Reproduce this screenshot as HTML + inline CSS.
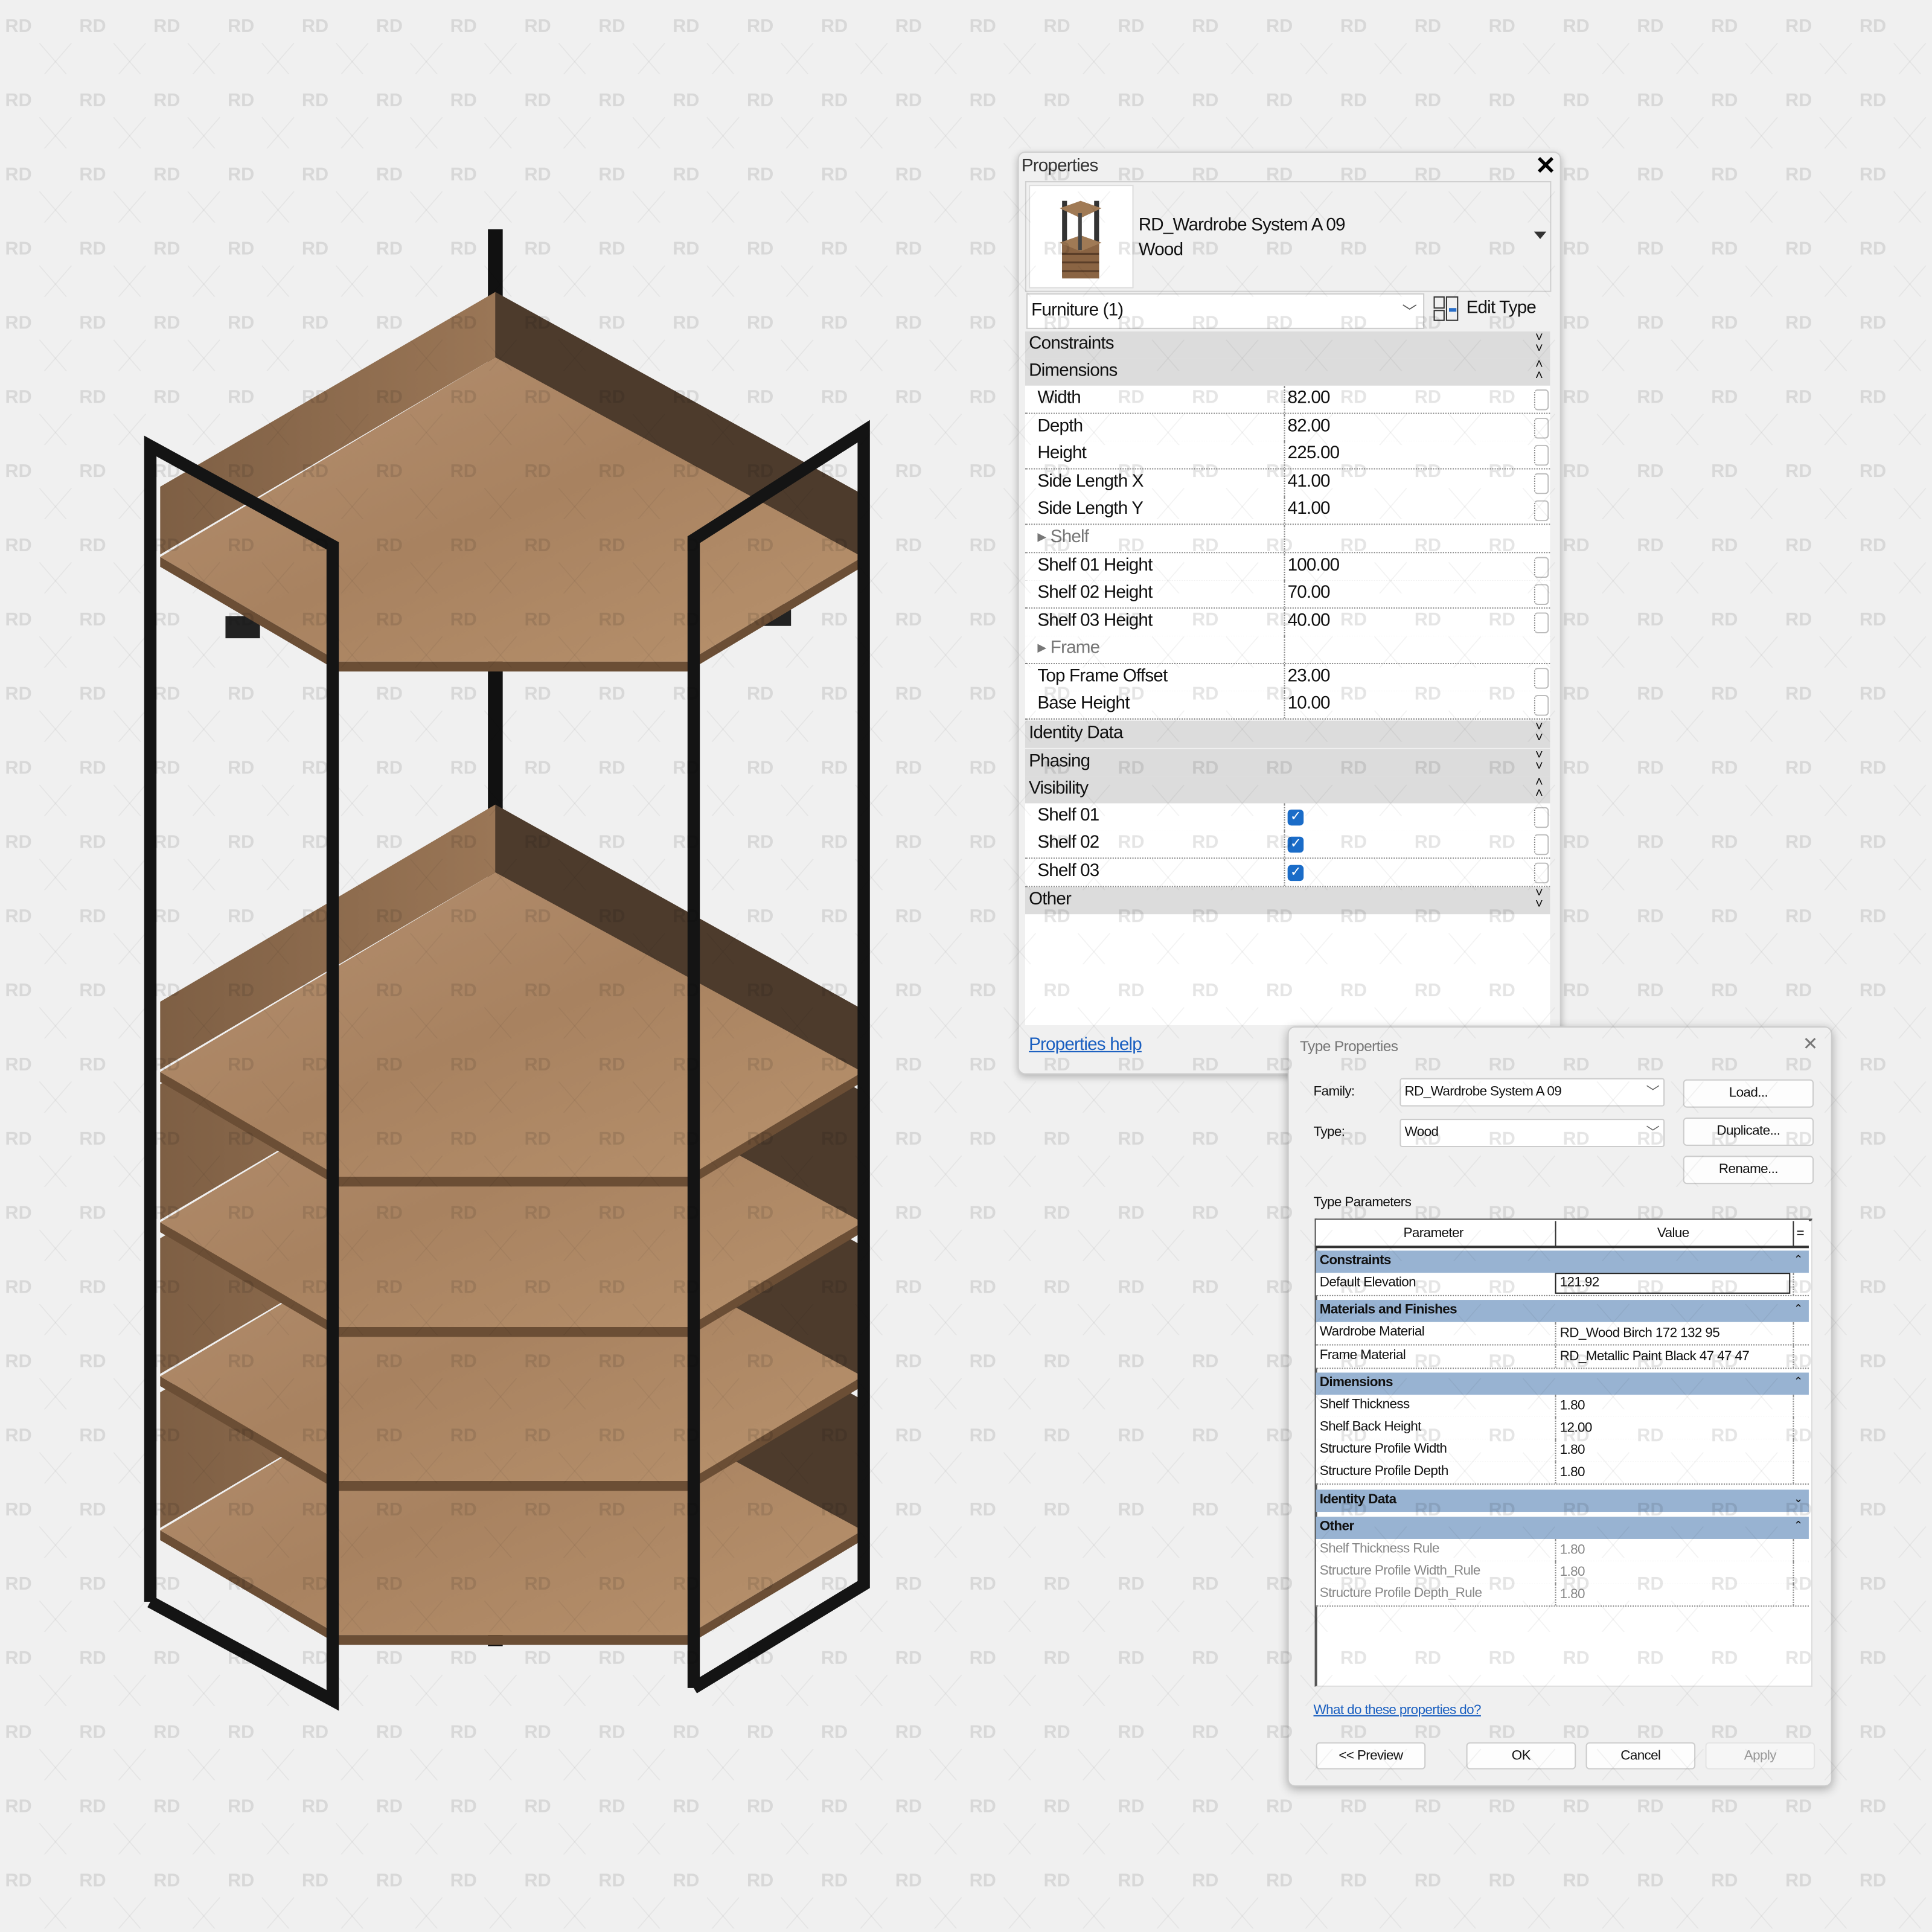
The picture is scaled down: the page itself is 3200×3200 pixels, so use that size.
<!DOCTYPE html>
<html><head><meta charset="utf-8">
<style>
html,body{margin:0;padding:0;background:#f0f0f0;}
#root{position:relative;width:1568px;height:1568px;transform:scale(2.040816);transform-origin:0 0;overflow:hidden;background:#f0f0f0;font-family:"Liberation Sans",sans-serif;}
.abs{position:absolute;}
.pp{font-size:14.5px;color:#111;letter-spacing:-0.4px;}
.row{position:absolute;left:832px;width:426px;height:22px;background:#fff;border-bottom:1px dotted #888;}
.row .l{position:absolute;left:10px;top:2px;}
.row .v{position:absolute;left:210px;top:2px;border-left:1px dotted #888;height:22px;top:0;padding-left:2px;line-height:21px;}
.row .cb{position:absolute;right:1px;top:3px;width:10px;height:15px;border:1px solid #bbb;border-radius:3px;border-left:1px dotted #888;}
.grp{position:absolute;left:832px;width:426px;height:22px;background:#dcdcdc;}
.grp span{position:absolute;left:3px;top:2px;}
.grp i{position:absolute;right:6px;top:1px;font-style:normal;font-size:11px;line-height:9px;}
.chk{display:inline-block;width:13px;height:13px;background:#1a6cc8;border-radius:3px;color:#fff;font-size:11px;line-height:13px;text-align:center;margin-top:4px;}
.tp{font-size:11px;color:#111;letter-spacing:-0.3px;}
.btn{position:absolute;background:#fdfdfd;border:1px solid #ccc;border-radius:3px;text-align:center;line-height:20px;font-size:11px;}
.trow{position:absolute;left:1068px;width:400px;height:18px;background:#fff;border-bottom:1px dotted #888;}
.trow .l{position:absolute;left:3px;top:2px;}
.trow .v{position:absolute;left:194px;top:0;height:18px;border-left:1px dotted #888;padding-left:3px;line-height:18px;width:190px;}
.trow .e{position:absolute;right:0;top:0;width:12px;height:18px;border-left:1px dotted #888;}
.tgrp{position:absolute;left:1068px;width:400px;height:18px;background:#98b3d2;font-weight:bold;}
.tgrp span{position:absolute;left:3px;top:2px;}
.tgrp i{position:absolute;right:5px;top:2px;font-style:normal;font-size:9px;font-weight:normal;}
.gray{color:#888;}
</style></head><body>
<div id="root">

<svg class="abs" style="left:0;top:0" width="1568" height="1568" viewBox="0 0 1568 1568">
<defs>
<linearGradient id="fl" x1="0" y1="0" x2="1" y2="1"><stop offset="0" stop-color="#b59070"/><stop offset="0.5" stop-color="#a88260"/><stop offset="1" stop-color="#b8926d"/></linearGradient>
<linearGradient id="lb" x1="0" y1="0" x2="1" y2="0"><stop offset="0" stop-color="#7e5f44"/><stop offset="1" stop-color="#9a7656"/></linearGradient>
</defs>
<rect x="396" y="186" width="12" height="1150" fill="#111"/>
<g transform="translate(0,790)">
<polygon points="402,290 130,450 130,340 402,180" fill="url(#lb)"/><polygon points="402,290 698,455 698,345 402,180" fill="#4d3b2c"/>
<polygon points="402,290 130,452 275,537 558,537 700,452" fill="url(#fl)"/>
<polygon points="130,452 275,537 558,537 700,452 700,460 558,545 275,545 130,460" fill="#6b4e35"/></g>
<g transform="translate(0,665)">
<polygon points="402,290 130,450 130,340 402,180" fill="url(#lb)"/><polygon points="402,290 698,455 698,345 402,180" fill="#4d3b2c"/>
<polygon points="402,290 130,452 275,537 558,537 700,452" fill="url(#fl)"/>
<polygon points="130,452 275,537 558,537 700,452 700,460 558,545 275,545 130,460" fill="#6b4e35"/></g>
<g transform="translate(0,540)">
<polygon points="402,290 130,450 130,340 402,180" fill="url(#lb)"/><polygon points="402,290 698,455 698,345 402,180" fill="#4d3b2c"/>
<polygon points="402,290 130,452 275,537 558,537 700,452" fill="url(#fl)"/>
<polygon points="130,452 275,537 558,537 700,452 700,460 558,545 275,545 130,460" fill="#6b4e35"/></g>
<g transform="translate(0,418)">
<polygon points="402,290 130,450 130,395 402,235" fill="url(#lb)"/><polygon points="402,290 698,455 698,400 402,235" fill="#4d3b2c"/>
<polygon points="402,290 130,452 275,537 558,537 700,452" fill="url(#fl)"/>
<polygon points="130,452 275,537 558,537 700,452 700,460 558,545 275,545 130,460" fill="#6b4e35"/></g>
<rect x="183" y="500" width="28" height="18" fill="#222"/>
<rect x="612" y="490" width="30" height="18" fill="#222"/>
<g>
<polygon points="402,290 130,450 130,395 402,237" fill="url(#lb)"/><polygon points="402,290 698,455 698,400 402,237" fill="#4d3b2c"/>
<polygon points="402,290 130,452 275,537 558,537 700,452" fill="url(#fl)"/>
<polygon points="130,452 275,537 558,537 700,452 700,460 558,545 275,545 130,460" fill="#6b4e35"/></g>
<g fill="none" stroke="#141414" stroke-width="10" stroke-linejoin="miter">
<polyline points="122,1300 122,362 270,443 270,1380 122,1300"/>
<polyline points="563,1370 563,438 701,350 701,1286 563,1370"/>
</g>
</svg>

<div class="abs" style="left:826px;top:123px;width:439px;height:747px;background:#f0f0f0;border:1px solid #cfcfcf;border-radius:6px;box-shadow:0 2px 6px rgba(0,0,0,.25);"></div>
<div class="abs pp" style="left:829px;top:127px;color:#333;">Properties</div>
<div class="abs" style="left:1246px;top:122px;font-size:20px;font-weight:bold;">✕</div>
<div class="abs" style="left:832px;top:147px;width:425px;height:88px;border:1px solid #d0d0d0;background:#f0f0f0;"></div>
<div class="abs" style="left:835px;top:150px;width:83px;height:82px;background:#fff;border:1px solid #ddd;">
<svg width="83" height="82"><rect x="26" y="12" width="4" height="62" fill="#333"/><rect x="52" y="12" width="4" height="62" fill="#333"/><polygon points="24,18 41,12 58,18 41,26" fill="#a07a55"/><rect x="26" y="45" width="30" height="30" fill="#8a6443"/><polygon points="24,46 41,40 58,46 41,53" fill="#a07a55"/><g stroke="#5a3e28" stroke-width="1.5"><line x1="26" y1="55" x2="56" y2="55"/><line x1="26" y1="62" x2="56" y2="62"/><line x1="26" y1="69" x2="56" y2="69"/></g><rect x="39" y="22" width="3" height="30" fill="#444"/></svg></div>
<div class="abs pp" style="left:924px;top:173px;line-height:20px;">RD_Wardrobe System A 09<br>Wood</div>
<div class="abs" style="left:1245px;top:188px;width:0;height:0;border-left:5px solid transparent;border-right:5px solid transparent;border-top:6px solid #333;"></div>
<div class="abs" style="left:833px;top:238px;width:321px;height:27px;background:#fff;border:1px solid #ccc;"></div>
<div class="abs pp" style="left:837px;top:244px;">Furniture (1)</div>
<div class="abs" style="left:1138px;top:244px;font-size:12px;color:#555;">﹀</div>
<svg class="abs" style="left:1163px;top:240px" width="22" height="22"><rect x="1" y="1" width="8" height="9" fill="none" stroke="#333"/><rect x="1" y="12" width="8" height="8" fill="none" stroke="#333"/><rect x="11" y="1" width="9" height="19" fill="none" stroke="#333"/><rect x="13" y="10" width="6" height="3" fill="#2a6fc9"/></svg>
<div class="abs pp" style="left:1190px;top:242px;">Edit Type</div>

<div class="grp pp" style="top:269px;"><span>Constraints</span><i>˅<br>˅</i></div>
<div class="grp pp" style="top:291px;"><span>Dimensions</span><i>˄<br>˄</i></div>
<div class="row pp" style="top:313px;"><span class="l">Width</span><span class="v">82.00</span><span class="cb"></span></div>
<div class="row pp" style="top:336px;"><span class="l">Depth</span><span class="v">82.00</span><span class="cb"></span></div>
<div class="row pp" style="top:358px;"><span class="l">Height</span><span class="v">225.00</span><span class="cb"></span></div>
<div class="row pp" style="top:381px;"><span class="l">Side Length X</span><span class="v">41.00</span><span class="cb"></span></div>
<div class="row pp" style="top:403px;"><span class="l">Side Length Y</span><span class="v">41.00</span><span class="cb"></span></div>
<div class="row pp" style="top:426px;"><span class="l" style="color:#777">▸ Shelf</span><span class="v"></span></div>
<div class="row pp" style="top:449px;"><span class="l">Shelf 01 Height</span><span class="v">100.00</span><span class="cb"></span></div>
<div class="row pp" style="top:471px;"><span class="l">Shelf 02 Height</span><span class="v">70.00</span><span class="cb"></span></div>
<div class="row pp" style="top:494px;"><span class="l">Shelf 03 Height</span><span class="v">40.00</span><span class="cb"></span></div>
<div class="row pp" style="top:516px;"><span class="l" style="color:#777">▸ Frame</span><span class="v"></span></div>
<div class="row pp" style="top:539px;"><span class="l">Top Frame Offset</span><span class="v">23.00</span><span class="cb"></span></div>
<div class="row pp" style="top:561px;"><span class="l">Base Height</span><span class="v">10.00</span><span class="cb"></span></div>
<div class="grp pp" style="top:585px;"><span>Identity Data</span><i>˅<br>˅</i></div>
<div class="grp pp" style="top:608px;"><span>Phasing</span><i>˅<br>˅</i></div>
<div class="grp pp" style="top:630px;"><span>Visibility</span><i>˄<br>˄</i></div>
<div class="row pp" style="top:652px;"><span class="l">Shelf 01</span><span class="v"><span class="chk">✓</span></span><span class="cb"></span></div>
<div class="row pp" style="top:674px;"><span class="l">Shelf 02</span><span class="v"><span class="chk">✓</span></span><span class="cb"></span></div>
<div class="row pp" style="top:697px;"><span class="l">Shelf 03</span><span class="v"><span class="chk">✓</span></span><span class="cb"></span></div>
<div class="grp pp" style="top:720px;"><span>Other</span><i>˅<br>˅</i></div>
<div class="abs" style="left:832px;top:742px;width:426px;height:90px;background:#fff;"></div>
<div class="abs pp" style="left:835px;top:840px;color:#1a5fc0;text-decoration:underline;">Properties help</div>

<div class="abs" style="left:1045px;top:833px;width:440px;height:615px;background:#f0f0f0;border:1px solid #ccc;border-radius:6px;box-shadow:0 2px 8px rgba(0,0,0,.3);"></div>
<div class="abs tp" style="left:1055px;top:842px;color:#777;font-size:12px;">Type Properties</div>
<div class="abs" style="left:1463px;top:838px;font-size:15px;color:#777;">✕</div>
<div class="abs tp" style="left:1066px;top:880px;">Family:</div>
<div class="abs" style="left:1136px;top:875px;width:213px;height:21px;background:#fff;border:1px solid #ccc;border-radius:2px;"></div>
<div class="abs tp" style="left:1140px;top:880px;">RD_Wardrobe System A 09</div>
<div class="abs tp" style="left:1336px;top:878px;color:#666;">﹀</div>
<div class="abs tp" style="left:1066px;top:913px;">Type:</div>
<div class="abs" style="left:1136px;top:908px;width:213px;height:21px;background:#fff;border:1px solid #ccc;border-radius:2px;"></div>
<div class="abs tp" style="left:1140px;top:913px;">Wood</div>
<div class="abs tp" style="left:1336px;top:911px;color:#666;">﹀</div>
<div class="btn tp" style="left:1366px;top:876px;width:104px;height:21px;">Load...</div>
<div class="btn tp" style="left:1366px;top:907px;width:104px;height:21px;">Duplicate...</div>
<div class="btn tp" style="left:1366px;top:938px;width:104px;height:21px;">Rename...</div>
<div class="abs tp" style="left:1066px;top:970px;">Type Parameters</div>
<div class="abs" style="left:1067px;top:989px;width:401px;height:377px;background:#fff;border-left:2px solid #555;border-top:2px solid #555;border-right:1px solid #ddd;border-bottom:1px solid #ddd;"></div>
<div class="abs" style="left:1068px;top:990px;width:400px;height:21px;border-bottom:2px solid #333;background:#fff;"></div>
<div class="abs" style="left:1262px;top:991px;width:1px;height:21px;background:#333;"></div>
<div class="abs" style="left:1455px;top:991px;width:1px;height:21px;background:#333;"></div>
<div class="abs tp" style="left:1139px;top:995px;">Parameter</div>
<div class="abs tp" style="left:1345px;top:995px;">Value</div>
<div class="abs tp" style="left:1458px;top:995px;">=</div>

<div class="tgrp tp" style="top:1015px;"><span>Constraints</span><i>⌃</i></div>
<div class="trow tp" style="top:1033px;"><span class="l">Default Elevation</span><span class="v" style="border:1.5px solid #222;width:186px;height:15px;line-height:15px;">121.92</span><span class="e"></span></div>
<div class="tgrp tp" style="top:1055px;"><span>Materials and Finishes</span><i>⌃</i></div>
<div class="trow tp" style="top:1073px;"><span class="l">Wardrobe Material</span><span class="v">RD_Wood Birch 172 132 95</span><span class="e"></span></div>
<div class="trow tp" style="top:1092px;"><span class="l">Frame Material</span><span class="v">RD_Metallic Paint Black 47 47 47</span><span class="e"></span></div>
<div class="tgrp tp" style="top:1114px;"><span>Dimensions</span><i>⌃</i></div>
<div class="trow tp" style="top:1132px;"><span class="l">Shelf Thickness</span><span class="v">1.80</span><span class="e"></span></div>
<div class="trow tp" style="top:1150px;"><span class="l">Shelf Back Height</span><span class="v">12.00</span><span class="e"></span></div>
<div class="trow tp" style="top:1168px;"><span class="l">Structure Profile Width</span><span class="v">1.80</span><span class="e"></span></div>
<div class="trow tp" style="top:1186px;"><span class="l">Structure Profile Depth</span><span class="v">1.80</span><span class="e"></span></div>
<div class="tgrp tp" style="top:1209px;"><span>Identity Data</span><i>⌄</i></div>
<div class="tgrp tp" style="top:1231px;"><span>Other</span><i>⌃</i></div>
<div class="trow tp gray" style="top:1249px;"><span class="l">Shelf Thickness Rule</span><span class="v">1.80</span><span class="e"></span></div>
<div class="trow tp gray" style="top:1267px;"><span class="l">Structure Profile Width_Rule</span><span class="v">1.80</span><span class="e"></span></div>
<div class="trow tp gray" style="top:1285px;"><span class="l">Structure Profile Depth_Rule</span><span class="v">1.80</span><span class="e"></span></div>
<div class="abs tp" style="left:1066px;top:1382px;color:#1a5fc0;text-decoration:underline;">What do these properties do?</div>
<div class="btn tp" style="left:1068px;top:1414px;width:87px;height:20px;">&lt;&lt; Preview</div>
<div class="btn tp" style="left:1190px;top:1414px;width:87px;height:20px;">OK</div>
<div class="btn tp" style="left:1287px;top:1414px;width:87px;height:20px;">Cancel</div>
<div class="btn tp" style="left:1384px;top:1414px;width:87px;height:20px;color:#999;border-color:#e4e4e4;background:#f6f6f6;">Apply</div>

<svg class="abs" style="left:0;top:0;pointer-events:none" width="1568" height="1568">
<defs><pattern id="wm" x="0" y="0" width="60.2" height="60.2" patternUnits="userSpaceOnUse">
<text x="15" y="26" text-anchor="middle" font-family="Liberation Sans, sans-serif" font-weight="bold" font-size="15" fill="rgba(0,0,0,0.1)">RD</text>
<g stroke="rgba(0,0,0,0.05)" stroke-width="0.8"><line x1="32" y1="35" x2="58" y2="65"/><line x1="58" y1="35" x2="32" y2="65"/></g>
</pattern></defs>
<rect width="1568" height="1568" fill="url(#wm)"/>
</svg>
</div>
</body></html>
